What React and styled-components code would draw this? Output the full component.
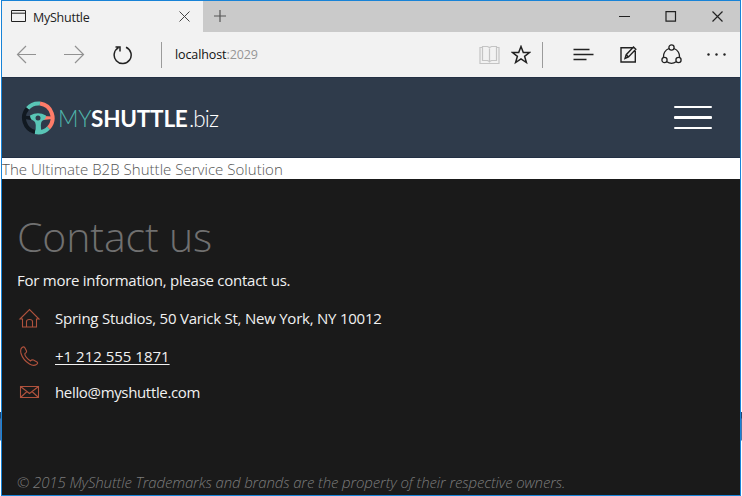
import React from 'react';
import styled, { createGlobalStyle } from 'styled-components';

const Global = createGlobalStyle`
  * { box-sizing: border-box; }
  html, body { margin: 0; overflow: hidden; }
  svg { display: block; fill: none; flex: none; }
  h1, p, ul { margin: 0; padding: 0; font-weight: inherit; }
`;

const Desktop = styled.div`
  width: 742px;
  height: 496px;
  padding: 0 1px;
  background: linear-gradient(#fff 412px, #23456f 412px, #23456f 418px, #4773ab 419px, #4773ab 440px, #fff 441px);
`;
const Window = styled.div`
  display: flex;
  flex-direction: column;
  height: 496px;
  border: 1px solid #1883d7;
  background: #1a1a1a;
  font-family: 'Open Sans', sans-serif;
`;
const TabBar = styled.div`
  display: flex;
  height: 31px;
  background: #cacaca;
`;
const Tab = styled.div`
  display: flex;
  align-items: center;
  width: 201px;
  padding: 0 13px 0 9px;
  background: #f2f2f2;
`;
const TabTitle = styled.span`
  flex: 1;
  margin-left: 7px;
  padding-top: 2px;
  font-size: 12.5px;
  line-height: 18px;
  letter-spacing: -0.25px;
  color: #222;
`;
const AddTab = styled.div`
  padding: 9px 0 0 11px;
`;
const WindowControls = styled.div`
  display: flex;
  align-items: center;
  gap: 35px;
  margin-left: auto;
  padding-right: 17px;
`;
const Toolbar = styled.div`
  display: flex;
  align-items: center;
  height: 45px;
  padding-left: 14px;
  background: #f2f2f2;
`;
const NavButtons = styled.div`
  display: flex;
  align-items: center;
  gap: 27px;
  width: 145px;
`;
const Separator = styled.i`
  width: 1px;
  height: 26px;
  background: #9b9b9b;
`;
const Address = styled.span`
  flex: 1;
  padding-left: 13px;
  font-size: 12.5px;
  letter-spacing: -0.1px;
  line-height: 18px;
  color: #111;
`;
const Port = styled.span`
  color: #969696;
`;
const PageActions = styled.div`
  display: flex;
  align-items: center;
  gap: 11px;
  margin-right: 11px;
`;
const BrowserActions = styled.div`
  display: flex;
  align-items: center;
  justify-content: space-between;
  width: 153px;
  margin: 0 14px 0 30px;
`;
const Header = styled.header`
  display: flex;
  align-items: center;
  justify-content: space-between;
  height: 81px;
  padding: 0 28px 0 19px;
  background: #2f3b4b;
  border-top: 1px solid #233044;
  border-bottom: 1px solid #233044;
`;
const Brand = styled.div`
  display: flex;
  align-items: center;
`;
const BrandName = styled.span`
  display: flex;
  align-items: baseline;
  margin-left: 3px;
  padding-top: 2px;
  font-family: Lato, sans-serif;
  font-size: 22.5px;
  line-height: 30px;
`;
const My = styled.span`
  width: 33px;
  font-weight: 300;
  letter-spacing: -0.3px;
  color: #4fb5aa;
`;
const Shuttle = styled.span`
  width: 98px;
  font-weight: 700;
  letter-spacing: -0.2px;
  color: #fff;
`;
const Biz = styled.span`
  padding-top: 1px;
  font-weight: 300;
  letter-spacing: -0.9px;
  color: #fff;
`;
const MenuButton = styled.div`
  display: flex;
  flex-direction: column;
  gap: 8px;
  width: 38px;
`;
const MenuBar = styled.i`
  height: 2.5px;
  border-radius: 1px;
  background: #fff;
`;
const Tagline = styled.p`
  height: 21px;
  background: #fff;
  color: #555;
  font-size: 15px;
  font-weight: 300;
  line-height: 22px;
  letter-spacing: 0.03px;
  white-space: nowrap;
`;
const Footer = styled.footer`
  display: flex;
  flex: 1;
  flex-direction: column;
  padding: 32px 15px 2px;
  background: #1a1a1a;
  color: #f1f1f1;
  font-size: 15px;
`;
const Heading = styled.h1`
  font-size: 41px;
  font-weight: 300;
  line-height: 50px;
  letter-spacing: -0.12px;
  color: #707070;
`;
const Intro = styled.p`
  margin-top: 8px;
  line-height: 22px;
  letter-spacing: -0.26px;
`;
const Contacts = styled.ul`
  display: grid;
  grid-template-rows: 38px 37px 36px;
  margin-top: 8px;
  list-style: none;
`;
const Contact = styled.li`
  display: grid;
  grid-template-columns: 38px auto;
  align-items: center;
  line-height: 22px;
`;
const ContactText = styled.span`
  justify-self: start;
  letter-spacing: ${p => p.$spacing || '0'};
  text-decoration: ${p => (p.$link ? 'underline' : 'none')};
  text-underline-offset: 2px;
`;
const Copyright = styled.p`
  margin-top: auto;
  color: #7c7c7c;
  font-style: italic;
  font-weight: 300;
  line-height: 22px;
  letter-spacing: -0.13px;
  white-space: nowrap;
`;

const Icon = ({ w, h, c = '#222', s = 1, children }) => (
  <svg width={w} height={h} viewBox={`0 0 ${w} ${h}`} stroke={c} strokeWidth={s}>{children}</svg>
);

const Wheel = () => (
  <svg width="34" height="34" viewBox="0 0 34 34">
    <path d="M6.500 7.500A14.500 14.500 0 0 1 19 2.600" stroke="#59c5b6" strokeWidth="4" />
    <path d="M19 2.600A14.500 14.500 0 0 1 27.500 27" stroke="#ff7c69" strokeWidth="4" />
    <path d="M27.500 27A14.500 14.500 0 0 1 14 31" stroke="#59c5b6" strokeWidth="4" />
    <path d="M14 31A14.500 14.500 0 0 1 6.500 7.500" stroke="#111921" strokeWidth="4" />
    <path d="M23 15L31 15.500V18L22 19Z" fill="#ff7c69" />
    <path d="M3 15L10 15V19L4 18Z" fill="#111921" />
    <path d="M9 14.500Q17 10 25 14.500Q25 18.500 21 20Q19 22 20.500 31L14 32Q16 22 13 20Q9 18.500 9 14.500Z" fill="#59c5b6" />
    <circle cx="17" cy="17" r="2.5" fill="#2f3b4b" />
  </svg>
);

export default function App() {
  return (
    <Desktop>
      <Global />
      <Window>
        <TabBar>
          <Tab>
            <Icon w={15} h={13}><path d="M.5.5h14v11H.5zM.5 3.2h14" /></Icon>
            <TabTitle>MyShuttle</TabTitle>
            <Icon w={11} h={11} c="#444"><path d="M.5.5l10 10m0-10l-10 10" /></Icon>
          </Tab>
          <AddTab><Icon w={12} h={12} c="#555" s={1.2}><path d="M6 0v12M0 6h12" /></Icon></AddTab>
          <WindowControls>
            <Icon w={11} h={11}><path d="M0 5.5h11" /></Icon>
            <Icon w={12} h={11} s={1.2}><path d="M1 .7h9.5v9.5H1z" /></Icon>
            <Icon w={11} h={11} s={1.2}><path d="M.5.5l10 10m0-10l-10 10" /></Icon>
          </WindowControls>
        </TabBar>
        <Toolbar>
          <NavButtons>
            <Icon w={21} h={20} c="#929292" s={1.2}><path d="M20 9.500H1.500M10 1L1.500 9.500l8.500 8.500" /></Icon>
            <Icon w={21} h={20} c="#929292" s={1.2}><path d="M0 9.500h19M11 1l8.500 8.500-8.500 8.500" /></Icon>
            <Icon w={20} h={20} s={1.5}><path d="M6.500 2.600A8.500 8.500 0 1 0 14 2.200M3.500 2h4.500v4.500" /></Icon>
          </NavButtons>
          <Separator />
          <Address>localhost<Port>:2029</Port></Address>
          <PageActions>
            <Icon w={21} h={20} c="#c4c4c4" s={1.2}><path d="M3.500 2.500H1v16h19v-16h-2.500M10.500 3.500v14M3.500 1.500h5l2 1 2-1h5v14h-5l-2 1-2-1h-5z" /></Icon>
            <Icon w={20} h={20} s={1.5}><path d="M10 1.500l2.300 6h6.200l-4.900 3.800 1.800 6.200-5.400-3.700-5.400 3.700 1.800-6.200-4.900-3.800h6.200z" /></Icon>
          </PageActions>
          <Separator />
          <BrowserActions>
            <Icon w={21} h={14} s={1.3}><path d="M.5 1.500h16M.5 6.500h20M.5 11.500h13" /></Icon>
            <Icon w={18} h={18} s={1.4}><path d="M16.300 5v11H2V1.700h13M6 12.500l1.200-3.800L14.500 1l2.300 2.300-7.300 7.700zM7.200 8.700l2.300 2.300" /></Icon>
            <Icon w={21} h={21} s={1.3}><circle cx="10.500" cy="3.500" r="2.600" /><circle cx="3.500" cy="16" r="2.600" /><circle cx="17.500" cy="16" r="2.600" /><path d="M8 4.500a8.300 8.300 0 0 0-5.400 9M13 4.500a8.300 8.300 0 0 1 5.400 9M5.800 17.800a8.500 8.500 0 0 0 9.400 0" /></Icon>
            <Icon w={19} h={3} c="none"><g fill="#222"><circle cx="1.500" cy="1.500" r="1.200" /><circle cx="9.500" cy="1.500" r="1.200" /><circle cx="17.500" cy="1.500" r="1.200" /></g></Icon>
          </BrowserActions>
        </Toolbar>
        <Header>
          <Brand>
            <Wheel />
            <BrandName><My>MY</My><Shuttle>SHUTTLE</Shuttle><Biz>.biz</Biz></BrandName>
          </Brand>
          <MenuButton><MenuBar /><MenuBar /><MenuBar /></MenuButton>
        </Header>
        <Tagline>The Ultimate B2B Shuttle Service Solution</Tagline>
        <Footer>
          <Heading>Contact us</Heading>
          <Intro>For more information, please contact us.</Intro>
          <Contacts>
            <Contact>
              <Icon w={25} h={22} c="#b0523d" s={1.1}><path d="M3 12L12.500 2.500l9.500 9.500H19.500v8H5.500v-8zM9.500 20v-5.500q0-2 3-2t3 2V20" /></Icon>
              <ContactText $spacing="-0.23px">Spring Studios, 50 Varick St, New York, NY 10012</ContactText>
            </Contact>
            <Contact>
              <Icon w={25} h={22} c="#b0523d" s={1.1}><path d="M5 2.500q2-1.500 3 .5l1.500 3q.5 1.500-1.500 2.500-1 3 5.500 7.500 1-1.500 3-1l3.500 2q1.500 1-.5 2.500-3 2-7-.5Q6 15 4 8.500 3 4 5 2.500z" /></Icon>
              <ContactText $link>+1 212 555 1871</ContactText>
            </Contact>
            <Contact>
              <Icon w={25} h={22} c="#b0523d" s={1.1}><path d="M3.500 5.500h18v11h-18zM3.500 5.500l9 7 9-7M3.500 16.500l6.500-6M21.500 16.500l-6.500-6" /></Icon>
              <ContactText $spacing="-0.34px">hello@myshuttle.com</ContactText>
            </Contact>
          </Contacts>
          <Copyright>© 2015 MyShuttle Trademarks and brands are the property of their respective owners.</Copyright>
        </Footer>
      </Window>
    </Desktop>
  );
}
